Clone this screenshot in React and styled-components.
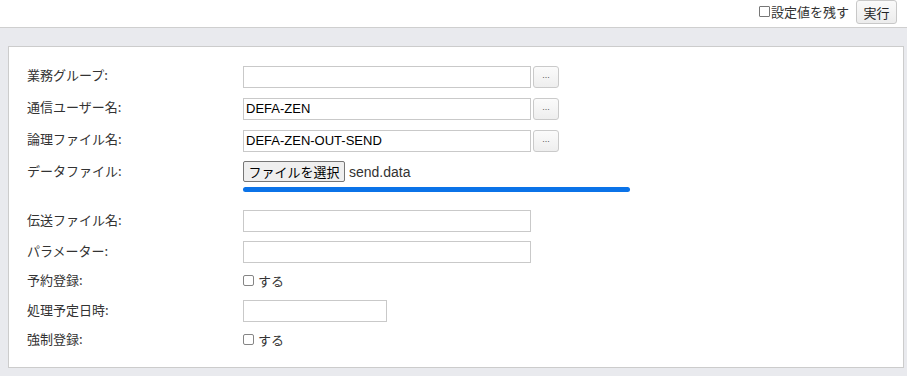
import React from 'react';
import styled, { createGlobalStyle } from 'styled-components';

const GlobalStyle = createGlobalStyle`
  html, body {
    margin: 0;
    padding: 0;
    background: #e9eaee;
    font-family: "Noto Sans CJK JP", "Noto Sans", sans-serif;
    font-size: 13px;
    color: #333;
  }
`;

const TopBar = styled.div`
  height: 27px;
  background: white;
  border-bottom: 1px solid #cfcfcf;
  display: flex;
  justify-content: flex-end;
  align-items: center;
  gap: 7px;
  padding-right: 10px;
`;

const KeepLabel = styled.label`
  display: flex;
  align-items: center;
  font-size: 13px;
  color: #333;
  line-height: 18px;
  margin-top: -4px;
`;

const SmallCheck = styled.span`
  width: 9px;
  height: 9px;
  border: 1px solid #777;
  border-radius: 1px;
  background: white;
  margin-right: 1px;
`;

const RunButton = styled.button`
  height: 24px;
  width: 41px;
  padding: 0;
  margin-top: -3px;
  border: 1px solid #c8c8c8;
  border-radius: 3px;
  background: linear-gradient(#fafafa, #ececec);
  font-family: "Noto Sans CJK JP", sans-serif;
  font-size: 13px;
  color: #222;
`;

const Page = styled.div`
  padding: 18px 3px 7px 8px;
`;

const Panel = styled.div`
  background: white;
  border: 1px solid #cccccc;
  padding: 18px 18px 19px 18px;
  display: flex;
  flex-direction: column;
`;

const Row = styled.div`
  display: flex;
  align-items: ${(p) => (p.$center ? 'center' : 'flex-start')};
  height: ${(p) => p.$h}px;
  margin-top: ${(p) => p.$mt}px;
`;

const Label = styled.div`
  width: 216px;
  flex-shrink: 0;
  font-size: 13px;
  line-height: 18px;
  padding-top: ${(p) => (p.$center ? 0 : 1)}px;
  color: #333;
`;

const Field = styled.div`
  display: flex;
  align-items: center;
  gap: 2px;
`;

const TextInput = styled.input`
  box-sizing: border-box;
  width: ${(p) => p.$w}px;
  height: 22px;
  border: 1px solid #c9c9c9;
  padding: 0 2px;
  font-family: "Liberation Sans", Arial, sans-serif;
  font-size: 13px;
  color: #000;
  outline: none;
`;

const DotsButton = styled.button`
  box-sizing: border-box;
  width: 26px;
  height: 22px;
  margin-top: 1px;
  padding: 0 0 4px;
  border: 1px solid #cacaca;
  border-radius: 3px;
  background: linear-gradient(#fbfbfb, #eeeeee);
  font-family: "Liberation Sans", Arial, sans-serif;
  font-size: 9px;
  letter-spacing: 0px;
  color: #555;
`;

const FileBox = styled.div`
  display: flex;
  flex-direction: column;
  gap: 5px;
`;

const FileLine = styled.div`
  display: flex;
  align-items: center;
  gap: 4px;
`;

const FileButton = styled.button`
  box-sizing: border-box;
  height: 21px;
  width: 102px;
  padding: 0;
  border: 1px solid #767676;
  border-radius: 2px;
  background: #efefef;
  font-family: "Noto Sans CJK JP", sans-serif;
  font-size: 13px;
  color: #000;
  line-height: 18px;
`;

const FileName = styled.span`
  font-family: "Liberation Sans", Arial, sans-serif;
  font-size: 14px;
  color: #333;
`;

const Progress = styled.div`
  width: 387px;
  height: 5px;
  border-radius: 3px;
  background: #0b73e8;
`;

const CheckLabel = styled.label`
  display: flex;
  align-items: center;
  gap: 4px;
  font-size: 13px;
  color: #333;
`;

const Box = styled.span`
  box-sizing: border-box;
  width: 11px;
  height: 11px;
  border: 1px solid #858585;
  border-radius: 2px;
  background: white;
`;

export default function App() {
  return (
    <>
      <GlobalStyle />
      <TopBar>
        <KeepLabel>
          <SmallCheck />
          設定値を残す
        </KeepLabel>
        <RunButton>実行</RunButton>
      </TopBar>
      <Page>
        <Panel>
          <Row $h={22} $mt={0}>
            <Label>業務グループ:</Label>
            <Field>
              <TextInput $w={288} defaultValue="" />
              <DotsButton>...</DotsButton>
            </Field>
          </Row>
          <Row $h={22} $mt={10}>
            <Label>通信ユーザー名:</Label>
            <Field>
              <TextInput $w={288} defaultValue="DEFA-ZEN" />
              <DotsButton>...</DotsButton>
            </Field>
          </Row>
          <Row $h={22} $mt={10}>
            <Label>論理ファイル名:</Label>
            <Field>
              <TextInput $w={288} defaultValue="DEFA-ZEN-OUT-SEND" />
              <DotsButton>...</DotsButton>
            </Field>
          </Row>
          <Row $h={31} $mt={10}>
            <Label>データファイル:</Label>
            <FileBox>
              <FileLine>
                <FileButton>ファイルを選択</FileButton>
                <FileName>send.data</FileName>
              </FileLine>
              <Progress />
            </FileBox>
          </Row>
          <Row $h={22} $mt={18}>
            <Label>伝送ファイル名:</Label>
            <TextInput $w={288} defaultValue="" />
          </Row>
          <Row $h={22} $mt={9}>
            <Label>パラメーター:</Label>
            <TextInput $w={288} defaultValue="" />
          </Row>
          <Row $h={18} $mt={8} $center>
            <Label $center>予約登録:</Label>
            <CheckLabel>
              <Box />
              する
            </CheckLabel>
          </Row>
          <Row $h={22} $mt={11}>
            <Label>処理予定日時:</Label>
            <TextInput $w={144} defaultValue="" />
          </Row>
          <Row $h={18} $mt={8} $center>
            <Label $center>強制登録:</Label>
            <CheckLabel>
              <Box />
              する
            </CheckLabel>
          </Row>
        </Panel>
      </Page>
    </>
  );
}
